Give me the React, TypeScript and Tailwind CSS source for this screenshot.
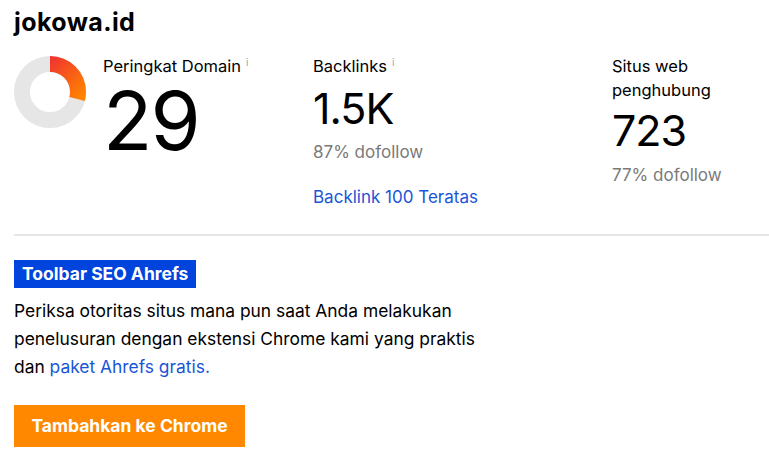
import React from "react";

function Donut({ value }: { value: number }) {
  const r = 28;
  const c = 2 * Math.PI * r;
  const len = (value / 100) * c;
  return (
    <svg width="72" height="72" viewBox="0 0 72 72">
      <defs>
        {/* coordinates are before the -90° rotation of the arc */}
        <linearGradient id="dr" gradientUnits="userSpaceOnUse" x1="66" y1="28" x2="30" y2="66">
          <stop offset="0%" stopColor="#ef2e34" />
          <stop offset="100%" stopColor="#ff8200" />
        </linearGradient>
      </defs>
      <circle cx="36" cy="36" r={r} fill="none" stroke="#e6e6e6" strokeWidth="16" />
      <circle
        cx="36"
        cy="36"
        r={r}
        fill="none"
        stroke="url(#dr)"
        strokeWidth="16"
        strokeDasharray={`${len} ${c}`}
        transform="rotate(-90 36 36)"
      />
    </svg>
  );
}

function Info() {
  return <span className="inline-block ml-[5px] text-[10px] leading-[10px] text-gray-400 align-top">i</span>;
}

export default function App() {
  return (
    <div className="w-[769px] h-[457px] bg-white overflow-hidden px-[14px] pt-[7px] text-black" style={{ fontFamily: "Inter, 'Noto Sans', sans-serif" }}>
      <h1 className="text-[25px] font-bold leading-[30px] tracking-[0.4px]">jokowa.id</h1>

      <div className="flex mt-[19px] h-[180px]">
        <div className="flex w-[299px]">
          <Donut value={29} />
          <div className="ml-[17px]">
            <div className="text-[16.5px] leading-[18px] mt-[1px]">
              Peringkat Domain
              <Info />
            </div>
            <div className="text-[81px] leading-[80px] mt-[6px] tracking-[-2px]">29</div>
          </div>
        </div>

        <div className="w-[299px]">
          <div className="text-[16.5px] leading-[18px] mt-[1px]">
            Backlinks
            <Info />
          </div>
          <div className="text-[43px] leading-[44px] mt-[11px] tracking-[-1px]">1.5K</div>
          <div className="text-[17px] leading-[24px] mt-[10px] text-[#7a7a7a]">87% dofollow</div>
          <a className="block text-[17px] leading-[24px] mt-[21px] text-[#1a55d8]">Backlink 100 Teratas</a>
        </div>

        <div>
          <div className="text-[16.5px] leading-[24px] -mt-[2px]">
            Situs web
            <br />
            penghubung
          </div>
          <div className="text-[43px] leading-[44px] mt-[6px] tracking-[-1px]">723</div>
          <div className="text-[17px] leading-[24px] mt-[11px] text-[#7a7a7a]">77% dofollow</div>
        </div>
      </div>

      <div className="h-[2px] bg-[#e6e6e6] -mr-[14px] mt-[-2px]" />

      <div className="mt-[24px]">
        <span className="inline-block bg-[#0044dd] text-white font-bold text-[17.5px] leading-[28px] px-[8px]">
          Toolbar SEO Ahrefs
        </span>
      </div>
      <p className="text-[17.4px] leading-[28px] mt-[9px] w-[480px]">
        Periksa otoritas situs mana pun saat Anda melakukan penelusuran dengan ekstensi Chrome kami yang praktis dan{" "}
        <a className="text-[#1a55d8]">paket Ahrefs gratis.</a>
      </p>
      <button className="block mt-[24px] bg-[#ff8800] text-white font-bold text-[17.5px] h-[42px] w-[231px]">
        Tambahkan ke Chrome
      </button>
    </div>
  );
}
